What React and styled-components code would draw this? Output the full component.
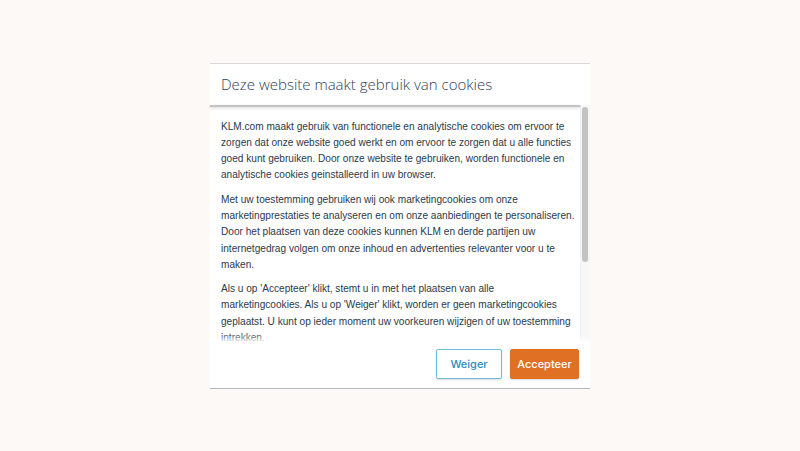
import React from "react";
import styled, { createGlobalStyle } from "styled-components";

const Global = createGlobalStyle`
  html, body { margin: 0; padding: 0; background: #fcf9f7; }
  body { font-family: "Liberation Sans", Arial, sans-serif; }
`;

const Page = styled.div`
  min-height: 451px;
  display: flex;
  align-items: center;
  justify-content: center;
`;

const Dialog = styled.div`
  width: 380px;
  height: 326px;
  background: #fff;
  border-top: 1px solid #d9d9d9;
  border-bottom: 1px solid #a9b0b6;
  display: flex;
  flex-direction: column;
  box-sizing: border-box;
`;

const Header = styled.div`
  height: 41px;
  flex: none;
  display: flex;
  align-items: center;
  padding: 0 11px;
`;

const Title = styled.h1`
  margin: 0;
  font-family: "Open Sans", sans-serif;
  font-weight: 300;
  font-size: 15px;
  color: #2b4355;
`;

const BodyWrap = styled.div`
  position: relative;
  flex: 1;
  min-height: 0;
  display: flex;
  &::before {
    content: "";
    position: absolute;
    left: 0;
    right: 10px;
    top: 0;
    height: 2px;
    background: #c4c4c4;
    box-shadow: 0 1px 3px rgba(0, 0, 0, 0.18);
    z-index: 1;
  }
`;

const Scroll = styled.div`
  flex: 1;
  overflow: hidden;
  padding: 14px 0 0 11px;
`;

const Track = styled.div`
  flex: none;
  width: 10px;
  background: #f7f7f7;
  border-left: 1px solid #efefef;
  box-sizing: border-box;
  padding: 2px 2px 0 1px;
`;

const Thumb = styled.div`
  height: 155px;
  background: #c3c3c3;
  border-radius: 4px;
`;

const Para = styled.p`
  margin: 0 0 8px;
  font-size: 10.1px;
  line-height: 16.3px;
  color: #2a3a4a;
  white-space: nowrap;
`;

const Footer = styled.div`
  flex: none;
  height: 47px;
  display: flex;
  align-items: center;
  justify-content: flex-end;
  gap: 8px;
  padding: 0 11px;
  box-shadow: 0 -3px 6px rgba(255, 255, 255, 0.9);
  position: relative;
  background: #fff;
`;

const Button = styled.button`
  height: 30px;
  width: ${(p) => p.$w}px;
  box-sizing: border-box;
  border-radius: 2px;
  font-family: Inter, "Liberation Sans", sans-serif;
  font-size: 11px;
  font-weight: 500;
  cursor: pointer;
  border: 1px solid ${(p) => (p.$primary ? "#e07023" : "#6dbdd8")};
  background: ${(p) => (p.$primary ? "#e07023" : "#fff")};
  color: ${(p) => (p.$primary ? "#fff" : "#2f8cbd")};
  box-shadow: 0 1px 2px rgba(0, 0, 0, 0.15);
`;

export default function App() {
  return (
    <>
      <Global />
      <Page>
        <Dialog>
          <Header>
            <Title>Deze website maakt gebruik van cookies</Title>
          </Header>
          <BodyWrap>
            <Scroll>
              <Para>
                KLM.com maakt gebruik van functionele en analytische cookies om ervoor te<br />
                zorgen dat onze website goed werkt en om ervoor te zorgen dat u alle functies<br />
                goed kunt gebruiken. Door onze website te gebruiken, worden functionele en<br />
                analytische cookies geinstalleerd in uw browser.
              </Para>
              <Para>
                Met uw toestemming gebruiken wij ook marketingcookies om onze<br />
                marketingprestaties te analyseren en om onze aanbiedingen te personaliseren.<br />
                Door het plaatsen van deze cookies kunnen KLM en derde partijen uw<br />
                internetgedrag volgen om onze inhoud en advertenties relevanter voor u te<br />
                maken.
              </Para>
              <Para>
                Als u op 'Accepteer' klikt, stemt u in met het plaatsen van alle<br />
                marketingcookies. Als u op 'Weiger' klikt, worden er geen marketingcookies<br />
                geplaatst. U kunt op ieder moment uw voorkeuren wijzigen of uw toestemming<br />
                intrekken.
              </Para>
            </Scroll>
            <Track>
              <Thumb />
            </Track>
          </BodyWrap>
          <Footer>
            <Button $w={66}>Weiger</Button>
            <Button $w={69} $primary>Accepteer</Button>
          </Footer>
        </Dialog>
      </Page>
    </>
  );
}
